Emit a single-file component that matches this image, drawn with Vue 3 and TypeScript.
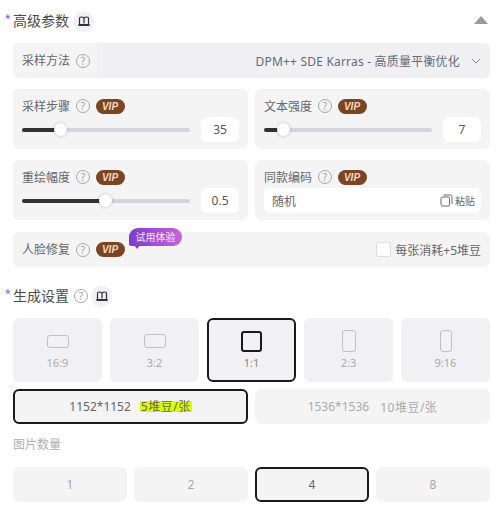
<script setup lang="ts">
interface SliderItem { label: string; value: string; pct: number }
const sliders: SliderItem[] = [
  { label: '采样步骤', value: '35', pct: 23 },
  { label: '文本强度', value: '7', pct: 12 },
]
const ratios = [
  { label: '16:9', w: 22, h: 13, active: false },
  { label: '3:2', w: 22, h: 14, active: false },
  { label: '1:1', w: 21, h: 21, active: true },
  { label: '2:3', w: 14, h: 22, active: false },
  { label: '9:16', w: 12, h: 22, active: false },
]
const counts = ['1', '2', '4', '8']
</script>

<template>
  <div class="page">
    <div class="head first">
      <span class="star">*</span><span class="title">高级参数</span>
      <span class="book">
        <svg width="12" height="12" viewBox="0 0 12 12" fill="none" stroke="#333" stroke-width="1.2"><path d="M1.5 9.5V3.2C1.5 2.4 2.1 2 3 2c1.3 0 2.3.3 3 1 .7-.7 1.7-1 3-1 .9 0 1.500.4 1.500 1.200v6.300M6 3v5.500M1 9.500h10v1H1z" /></svg>
      </span>
      <svg class="caret" width="14" height="8" viewBox="0 0 14 8"><path d="M7 0l7 8H0z" fill="#9b9b9b" /></svg>
    </div>

    <div class="select">
      <div class="select-label"><span class="lab">采样方法</span><span class="q">?</span></div>
      <div class="select-value">
        <span>DPM++ SDE Karras - 高质量平衡优化</span>
        <svg width="10" height="6" viewBox="0 0 10 6" fill="none" stroke="#8a8a8a" stroke-width="1"><path d="M1 1l4 4 4-4" /></svg>
      </div>
    </div>

    <div class="two row-a">
      <div v-for="s in sliders" :key="s.label" class="card">
        <div class="line"><span class="lab">{{ s.label }}</span><span class="q">?</span><span class="vip">VIP</span></div>
        <div class="ctl">
          <div class="track"><div class="fill" :style="{ width: s.pct + '%' }"><i class="thumb"></i></div></div>
          <div class="num">{{ s.value }}</div>
        </div>
      </div>
    </div>

    <div class="two row-b">
      <div class="card">
        <div class="line"><span class="lab">重绘幅度</span><span class="q">?</span><span class="vip">VIP</span></div>
        <div class="ctl">
          <div class="track"><div class="fill" :style="{ width: '50%' }"><i class="thumb"></i></div></div>
          <div class="num">0.5</div>
        </div>
      </div>
      <div class="card">
        <div class="line"><span class="lab">同款编码</span><span class="q">?</span><span class="vip">VIP</span></div>
        <div class="seed">
          <span>随机</span>
          <span class="paste">
            <svg width="13" height="13" viewBox="0 0 13 13" fill="none" stroke="#666" stroke-width="1"><rect x="1" y="3" width="8.500" height="9" rx="1.500" /><path d="M3.500 1h7a1.500 1.500 0 0 1 1.500 1.500V10" /></svg>
            粘贴
          </span>
        </div>
      </div>
    </div>

    <div class="face">
      <div class="line"><span class="lab">人脸修复</span><span class="q">?</span><span class="vip">VIP</span></div>
      <span class="trial">试用体验</span>
      <label class="check"><i class="box"></i>每张消耗+5堆豆</label>
    </div>

    <div class="head second">
      <span class="star">*</span><span class="title">生成设置</span><span class="q q-head">?</span>
      <span class="book">
        <svg width="12" height="12" viewBox="0 0 12 12" fill="none" stroke="#333" stroke-width="1.2"><path d="M1.5 9.5V3.2C1.5 2.4 2.1 2 3 2c1.3 0 2.3.3 3 1 .7-.7 1.700-1 3-1 .9 0 1.500.4 1.500 1.200v6.300M6 3v5.500M1 9.500h10v1H1z" /></svg>
      </span>
    </div>

    <div class="ratios">
      <div v-for="r in ratios" :key="r.label" class="ratio" :class="{ on: r.active }">
        <div class="shape-wrap"><i class="shape" :style="{ width: r.w + 'px', height: r.h + 'px' }"></i></div>
        <span>{{ r.label }}</span>
      </div>
    </div>

    <div class="two sizes">
      <div class="opt on">1152*1152<mark>5堆豆/张</mark></div>
      <div class="opt">1536*1536<span class="cost">10堆豆/张</span></div>
    </div>

    <div class="count-title">图片数量</div>
    <div class="counts">
      <div v-for="c in counts" :key="c" class="opt" :class="{ on: c === '4' }">{{ c }}</div>
    </div>
  </div>
</template>

<style>
html, body { margin: 0; background: #fff; }
</style>

<style scoped>
.page {
  width: 500px;
  height: 509px;
  box-sizing: border-box;
  padding: 0 10px 0 13px;
  overflow: hidden;
  font-family: "Noto Sans", "Noto Sans CJK SC", sans-serif;
  font-size: 12px;
  color: #666;
}
.head { display: flex; align-items: center; position: relative; height: 22px; }
.first { margin-top: 10px; }
.second { margin-top: 18px; }
.star {
  position: absolute;
  left: -8px;
  top: 2px;
  color: #6a5cf5;
  font-size: 10px;
  line-height: 12px;
}
.title { font-size: 14px; color: #4a4a4a; line-height: 22px; }
.book {
  width: 21px;
  height: 21px;
  border-radius: 50%;
  background: #f1f1f5;
  margin-left: 4px;
  display: flex;
  align-items: center;
  justify-content: center;
}
.caret { margin-left: auto; margin-right: 2px; margin-top: -2px; }
.q {
  width: 12px;
  height: 12px;
  border: 1px solid #a8a8a8;
  border-radius: 50%;
  color: #a0a0a0;
  font-size: 10px;
  line-height: 12px;
  text-align: center;
  margin-left: 6px;
  flex: none;
}
.q-head { margin-left: 5px; }
.q-head + .book { margin-left: 3px; }
.lab { color: #666; line-height: 15px; }
.select {
  height: 35px;
  margin-top: 11px;
  display: flex;
  border-radius: 6px;
  overflow: hidden;
  background: #f0f0f3;
}
.select-label {
  width: 84px;
  padding-left: 9px;
  box-sizing: border-box;
  display: flex;
  align-items: center;
  background: #f4f4f5;
}
.select-value {
  flex: 1;
  display: flex;
  align-items: center;
  justify-content: flex-end;
  gap: 11px;
  padding-right: 9px;
  font-size: 12px;
  letter-spacing: .2px;
  color: #666a75;
}
.two { display: grid; grid-template-columns: 235px 235px; gap: 7px; }
.row-a { margin-top: 11px; }
.row-b { margin-top: 11px; }
.card {
  height: 60px;
  box-sizing: border-box;
  padding: 9px 9px 0;
  background: #f4f4f5;
  border-radius: 6px;
}
.line { display: flex; align-items: center; height: 16px; }
.vip {
  width: 29px;
  height: 15px;
  margin-left: 5.5px;
  border-radius: 8px;
  background: #7a4522;
  color: #f3dcc0;
  font-family: "Liberation Sans", sans-serif;
  font-size: 10px;
  font-weight: 700;
  font-style: italic;
  line-height: 15px;
  text-align: center;
  flex: none;
}
.ctl { display: flex; align-items: center; margin-top: 3px; height: 25px; }
.track {
  width: 169px;
  height: 4px;
  margin-left: -.5px;
  border-radius: 2px;
  background: #d6d3e1;
}
.fill {
  height: 4px;
  border-radius: 2px;
  background: #333;
  position: relative;
}
.thumb {
  position: absolute;
  right: -6.500px;
  top: -4.500px;
  width: 13px;
  height: 13px;
  border-radius: 50%;
  background: #fff;
  box-shadow: 0 0 3px rgba(0, 0, 0, .25);
}
.num {
  width: 38px;
  height: 25px;
  margin-left: 11px;
  background: #fff;
  border-radius: 6px;
  text-align: center;
  line-height: 26px;
  color: #555;
}
.seed {
  height: 25px;
  margin-top: 3px;
  background: #fff;
  border-radius: 6px;
  display: flex;
  align-items: center;
  justify-content: space-between;
  padding: 0 5px 0 8px;
  color: #666;
}
.paste { display: flex; align-items: center; gap: 2px; font-size: 10px; margin-right: 1px; }
.face {
  height: 35px;
  margin-top: 12px;
  background: #f4f4f5;
  border-radius: 6px;
  padding: 0 9px;
  display: flex;
  align-items: center;
  justify-content: space-between;
  position: relative;
}
.trial {
  position: absolute;
  left: 116px;
  top: -4px;
  width: 53px;
  height: 18px;
  border-radius: 9px 9px 9px 2px;
  background: linear-gradient(90deg, #7a3cd0, #cb62d8);
  color: #f3e6fb;
  font-size: 10px;
  line-height: 18px;
  text-align: center;
}
.trial::after {
  content: "";
  position: absolute;
  left: 5px;
  bottom: -3px;
  border-left: 3px solid transparent;
  border-right: 3px solid transparent;
  border-top: 4px solid #7f40d2;
}
.check { display: flex; align-items: center; color: #666; }
.box {
  width: 13px;
  height: 13px;
  border: 1px solid #ddd;
  border-radius: 3px;
  background: #fff;
  margin-right: 4px;
}
.ratios {
  display: grid;
  grid-template-columns: repeat(5, 1fr);
  gap: 8px;
  margin-top: 11px;
}
.ratio {
  height: 64px;
  box-sizing: border-box;
  background: #f1f1f3;
  border: 2px solid transparent;
  border-radius: 6px;
  display: flex;
  flex-direction: column;
  align-items: center;
  color: #aaa;
  font-size: 11px;
  line-height: 14px;
  padding-top: 10px;
}
.shape-wrap { height: 22px; display: flex; align-items: center; justify-content: center; margin-bottom: 4px; }
.shape {
  display: block;
  box-sizing: border-box;
  border: 1.500px solid #c0c0c0;
  border-radius: 3px;
}
.ratio.on { border-color: #1a1a1a; color: #888; }
.ratio.on .shape { border-color: #1a1a1a; border-width: 2px; }
.sizes { margin-top: 7px; }
.opt {
  height: 35px;
  box-sizing: border-box;
  background: #f4f4f5;
  border: 2px solid transparent;
  border-radius: 6px;
  display: flex;
  align-items: center;
  justify-content: center;
  color: #aaa;
  font-size: 12px;
}
.opt.on { border-color: #1a1a1a; color: #666; }
mark {
  background: #d8ff00;
  color: #666;
  margin-left: 9px;
  padding: 0 1px;
  letter-spacing: .5px;
  line-height: 11px;
}
.cost { margin-left: 11px; letter-spacing: .5px; }
.count-title { color: #b0b0b0; margin-top: 13px; line-height: 16px; }
.counts {
  display: grid;
  grid-template-columns: repeat(4, 1fr);
  gap: 7px;
  margin-top: 14px;
}
</style>
